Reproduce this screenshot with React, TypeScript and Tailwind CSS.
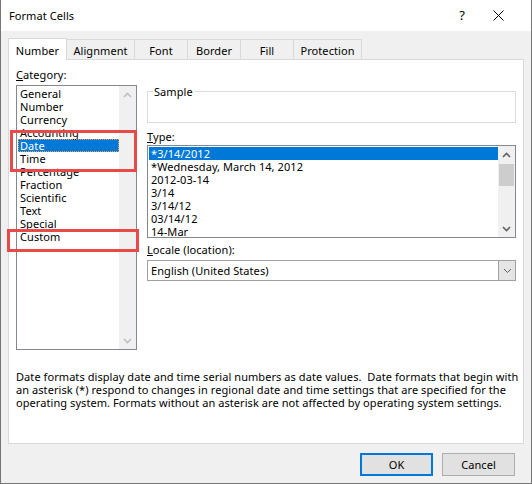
const categories = [
  "General",
  "Number",
  "Currency",
  "Accounting",
  "Date",
  "Time",
  "Percentage",
  "Fraction",
  "Scientific",
  "Text",
  "Special",
  "Custom",
];

const types = [
  "*3/14/2012",
  "*Wednesday, March 14, 2012",
  "2012-03-14",
  "3/14",
  "3/14/12",
  "03/14/12",
  "14-Mar",
];

const tabs = [
  { label: "Alignment", w: "w-[69px]" },
  { label: "Font", w: "w-[54px]" },
  { label: "Border", w: "w-[54px]" },
  { label: "Fill", w: "w-[54px]" },
  { label: "Protection", w: "w-[69px]" },
];

function Chevron({ up, color = "#a8a8a8", thin }: { up?: boolean; color?: string; thin?: boolean }) {
  return (
    <svg width="9" height="6" viewBox="0 0 9 6" className="block">
      <path
        d={up ? "M1 5 L4.5 1.5 L8 5" : "M1 1 L4.5 4.5 L8 1"}
        fill="none"
        stroke={color}
        strokeWidth={thin ? 1 : 1.6}
      />
    </svg>
  );
}

function ScrollBar({ thumb }: { thumb?: boolean }) {
  return (
    <div className="w-[17px] bg-[#f0f0f0] flex flex-col items-center">
      <div className="h-[17px] flex items-center justify-center">
        <Chevron up color={thumb ? "#606060" : "#bfbfbf"} />
      </div>
      {thumb && <div className="w-[15px] h-[22px] bg-[#cdcdcd] mt-px" />}
      <div className="flex-1" />
      <div className="h-[17px] flex items-center justify-center">
        <Chevron color={thumb ? "#606060" : "#bfbfbf"} />
      </div>
    </div>
  );
}

export default function App() {
  return (
    <div className="w-[532px] h-[484px] flex flex-col bg-[#f0f0f0] border-l border-r border-b border-[#767676] text-[11px] tracking-[0.07px] text-black font-['Segoe_UI','Noto_Sans',sans-serif] leading-[13px]">
      {/* title bar */}
      <div className="h-[31px] bg-white flex items-center pl-[8px] shrink-0">
        <span className="text-[11px]">Format Cells</span>
        <div className="flex-1" />
        <span className="text-[13px] mr-[28px]">?</span>
        <svg width="11" height="11" viewBox="0 0 11 11" className="mr-[27px]">
          <path d="M0.5 0.5 L10.5 10.5 M10.5 0.5 L0.5 10.5" stroke="#000" strokeWidth="1" />
        </svg>
      </div>

      <div className="flex-1 flex flex-col px-[7px]">
        {/* tabs */}
        <div className="flex items-end pt-[7px] relative z-10">
          <div className="w-[59px] h-[22px] -mb-px bg-white border border-b-0 border-[#d9d9d9] flex items-center justify-center pt-[1px]">
            Number
          </div>
          {tabs.map((t) => (
            <div
              key={t.label}
              className={`${t.w} h-[20px] -ml-px border border-b-0 border-[#d9d9d9] flex items-center justify-center pt-[2px]`}
            >
              {t.label}
            </div>
          ))}
        </div>

        {/* panel */}
        <div className="h-[385px] bg-white border border-[#d9d9d9] relative flex flex-col pl-[7px] pr-[5px]">
          <div className="flex gap-[10px]">
            {/* left column */}
            <div className="w-[121px] pt-[7px]">
              <div className="h-[16px] leading-[16px]">
                <span className="underline">C</span>ategory:
              </div>
              <div className="mt-[2px] h-[265px] border border-[#828790] flex">
                <div className="flex-1 pt-px pl-px">
                  {categories.map((c) => (
                    <div
                      key={c}
                      className={`h-[13px] pl-[2px] ${c === "Date" ? "bg-[#0078d7] text-white outline outline-1 outline-dotted outline-[#f0a050] -outline-offset-1" : ""}`}
                    >
                      {c}
                    </div>
                  ))}
                </div>
                <ScrollBar />
              </div>
            </div>

            {/* right column */}
            <div className="w-[369px]">
              <div className="mt-[31px] h-[32px] border border-[#dcdcdc] relative">
                <span className="absolute -top-[7px] left-[5px] bg-white px-px">Sample</span>
              </div>
              <div className="mt-[6px] h-[16px] leading-[16px]">
                <span className="underline">T</span>ype:
              </div>
              <div className="h-[93px] border border-[#828790] flex">
                <div className="flex-1 pt-px pl-px">
                  {types.map((t, i) => (
                    <div
                      key={t}
                      className={`h-[13px] pl-[2px] ${i === 0 ? "bg-[#0078d7] text-white" : ""}`}
                    >
                      {t}
                    </div>
                  ))}
                </div>
                <ScrollBar thumb />
              </div>
              <div className="mt-[4px] h-[16px] leading-[16px]">
                <span className="underline">L</span>ocale (location):
              </div>
              <div className="mt-[2px] h-[21px] border border-[#a0a0a0] flex items-center">
                <span className="flex-1 pl-[3px]">English (United States)</span>
                <div className="w-[17px] h-full bg-[#e5e5e5] border-l border-[#a0a0a0] flex items-center justify-center">
                  <Chevron color="#606060" thin />
                </div>
              </div>
            </div>
          </div>

          <p className="mt-[20px] whitespace-pre">
            {"Date formats display date and time serial numbers as date values.  Date formats that begin with\nan asterisk (*) respond to changes in regional date and time settings that are specified for the\noperating system. Formats without an asterisk are not affected by operating system settings."}
          </p>

          {/* annotation boxes */}
          <div className="absolute left-px top-[70px] w-[127px] h-[42px] border-[3px] border-[#e84a4a]" />
          <div className="absolute -left-[2px] top-[169px] w-[132px] h-[23px] border-[3px] border-[#e84a4a]" />
        </div>

        {/* footer */}
        <div className="flex justify-end gap-[9px] mt-[9px] pr-[9px]">
          <button className="w-[73px] h-[23px] bg-[#e1e1e1] border-2 border-[#0078d7]">OK</button>
          <button className="w-[73px] h-[23px] bg-[#e1e1e1] border border-[#adadad]">Cancel</button>
        </div>
      </div>
    </div>
  );
}
